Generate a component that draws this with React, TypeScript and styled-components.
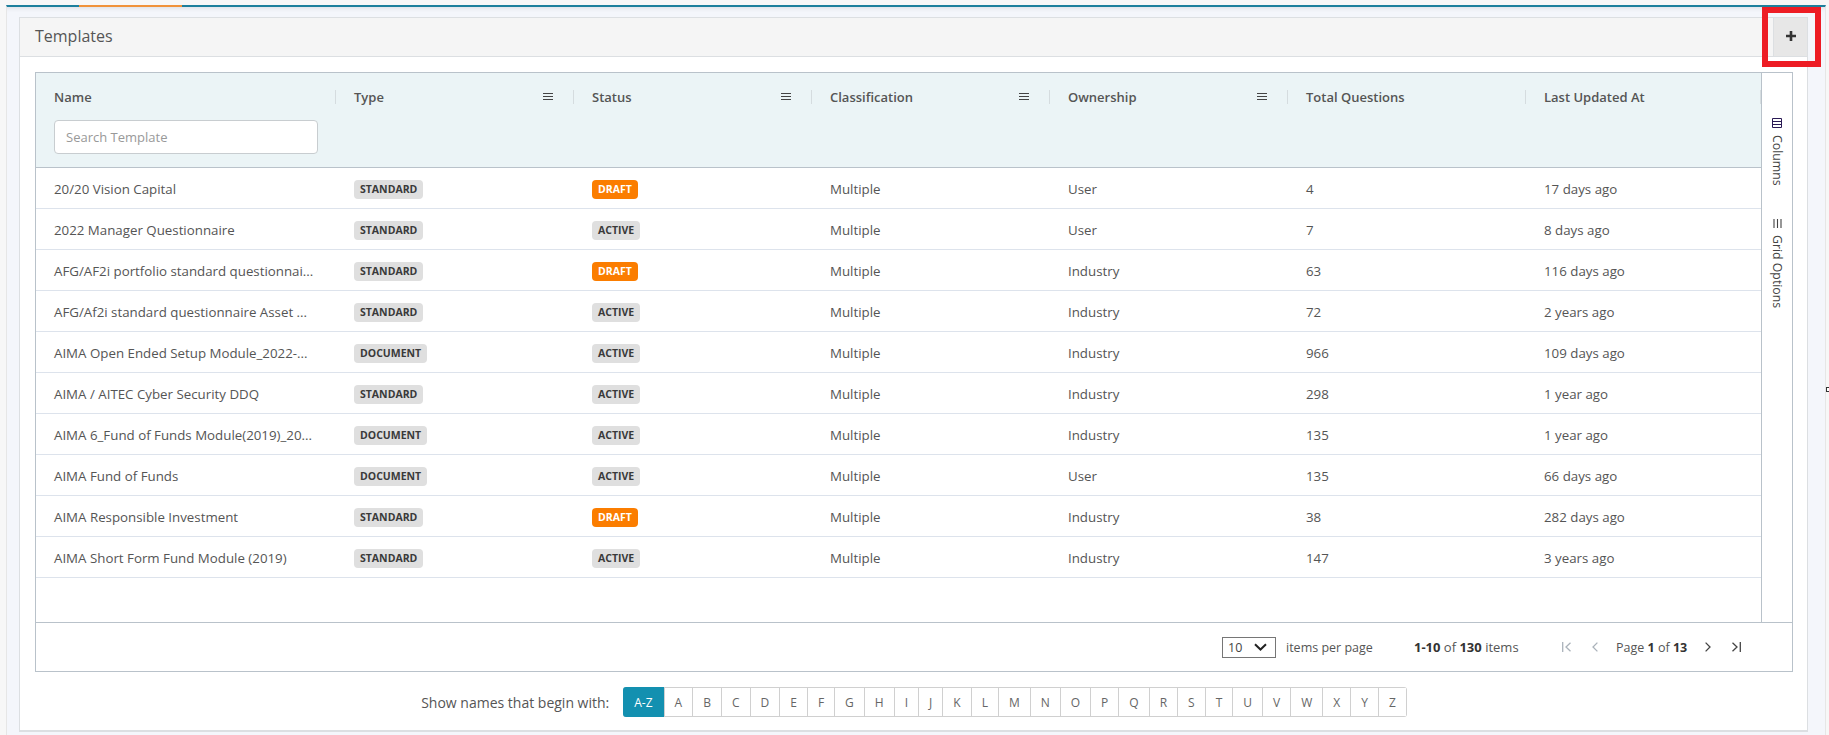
import React from "react";
import styled, { createGlobalStyle } from "styled-components";

const Global = createGlobalStyle`
  html, body { margin: 0; padding: 0; height: 735px; overflow: hidden; background: #f7f7f7; }
  body { font-family: "Open Sans", "Noto Sans", sans-serif; color: #555; font-size: 13px; }
  * { box-sizing: border-box; }
`;
const Page = styled.div`
  position: relative; width: 1829px; height: 735px; padding: 5px 3px 0 6px; overflow: hidden;
`;
const Shell = styled.div`
  position: relative; height: 730px; background: #f4f6fb;
  border-left: 1px solid #e6e6e6; border-right: 1px solid #e6e6e6; border-top: 2px solid #1d7f9c;
  padding: 10px 17px 0 12px;
  box-shadow: inset 0 5px 5px -4px rgba(0,0,0,.10);
`;
const ActiveTab = styled.div`
  position: absolute; left: 72px; top: -2px; width: 103px; height: 2px; background: #f0923a;
`;
const Panel = styled.section`
  height: 715px; background: #fff; border: 1px solid #dcdfe2; border-bottom-width: 2px;
`;
const PanelHead = styled.header`
  display: flex; align-items: stretch; justify-content: space-between; height: 39px;
  background: #f5f5f5; border-bottom: 1px solid #dcdfe2;
`;
const Title = styled.h1`
  margin: 0; padding-left: 15px; font-size: 16px; line-height: 36px; font-weight: 400; color: #555;
`;
const AddButton = styled.button`
  width: 34px; border: 0; border-left: 1px solid #dcdfe2; background: #e7e7e7; padding: 0 0 2px;
  display: flex; align-items: center; justify-content: center;
`;
const Body = styled.div`
  padding: 15px 14px 0 15px;
`;
const Grid = styled.div`
  border: 1px solid #b9c2ca; height: 600px; display: flex; flex-direction: column;
`;
const GridMain = styled.div`
  display: flex; height: 550px; border-bottom: 1px solid #b9c2ca;
`;
const GridTable = styled.div`
  flex: 1; min-width: 0;
`;
const HeadRow = styled.div`
  height: 95px; background: #ebf4f6; border-bottom: 1px solid #b9c2ca;
  display: grid; grid-template-columns: 300px repeat(5, 238px) 1fr;
`;
const HeadCell = styled.div`
  padding: 17px 0 0 18px; position: relative;
  &::after {
    content: ""; position: absolute; right: 0; top: 17px; width: 1px; height: 14px; background: #d5dcdf;
  }
`;
const HeadTop = styled.div`
  display: flex; align-items: center; justify-content: space-between; padding-right: 21px; height: 14px;
`;
const HeadLabel = styled.span`
  font-size: 13px; font-weight: 600; color: #555; line-height: 14px;
`;
const Search = styled.input`
  display: block; margin-top: 16px; width: 264px; height: 34px; padding: 0 11px;
  border: 1px solid #c8cdd0; border-radius: 4px; background: #fff; font: 400 13px "Open Sans", sans-serif; color: #555;
  &::placeholder { color: #999; opacity: 1; }
`;
const Row = styled.div`
  height: 41px; padding-top: 2px; border-bottom: 1px solid #dde3ec; display: grid; grid-template-columns: 300px repeat(5, 238px) 1fr;
  align-items: center;
`;
const Cell = styled.div`
  padding-left: 18px; font-size: 13.3px; color: #555; white-space: nowrap;
`;
const Badge = styled.span<{ $draft?: boolean }>`
  display: inline-block; height: 19px; line-height: 19px; padding: 0 6px; border-radius: 4px;
  font-size: 10.5px; font-weight: 700; vertical-align: middle;
  background: ${p => (p.$draft ? "#fb7d00" : "#dfdfdf")};
  color: ${p => (p.$draft ? "#fff" : "#3a3a3a")};
`;
const SideBar = styled.aside`
  width: 31px; border-left: 1px solid #b9c2ca; display: flex; flex-direction: column; align-items: center;
  padding-top: 45px; gap: 33px;
`;
const SideTab = styled.div`
  display: flex; flex-direction: row; align-items: center; gap: 7px;
  writing-mode: vertical-rl; font-size: 12.3px; color: #444; line-height: 14px;
`;
const Pager = styled.div`
  height: 48px; display: flex; align-items: center; padding-left: 1186px; font-size: 12.5px; color: #555;
`;
const PageSelect = styled.div`
  width: 54px; height: 21px; border: 1px solid #767676; display: flex; align-items: center;
  justify-content: space-between; padding: 0 8px 0 5px; font-size: 12.5px; color: #444;
`;
const PerPage = styled.span`
  margin-left: 10px; width: 128px;
`;
const Count = styled.span`
  width: 148px; font-size: 13px; white-space: nowrap;
`;
const PageLabel = styled.span`
  margin: 0 17px 0 18px; width: 72px; white-space: nowrap;
`;
const PagerIcon = styled.span<{ $gap?: number }>`
  display: inline-flex; margin-left: ${p => p.$gap ?? 0}px;
`;
const Strong = styled.b`
  font-weight: 700; color: #333;
`;
const Alpha = styled.div`
  display: flex; align-items: center; justify-content: center; padding: 15px 0 0 0;
`;
const AlphaLabel = styled.span`
  margin-right: 14px; font-size: 14px; color: #555;
`;
const AlphaGroup = styled.div`
  display: flex; height: 30px; border: 1px solid #d0d0d0; border-left: 0; border-radius: 3px;
`;
const Letter = styled.button<{ $active?: boolean }>`
  height: 28px; padding: 0 10px; border: 0; border-left: 1px solid #d0d0d0; font: 400 12px "Open Sans", sans-serif;
  color: ${p => (p.$active ? "#fff" : "#666")};
  background: ${p => (p.$active ? "#1390b0" : "#fff")};
  ${p => p.$active && "margin: -1px 0; height: 30px; padding: 0 11px; border-radius: 3px 0 0 3px; border-left: 0;"}
`;
const RedBox = styled.div`
  position: absolute; left: 1762px; top: 7px; width: 59px; height: 60px; border: 6px solid #ed1c24; pointer-events: none;
`;
const EdgeMark = styled.div`
  position: absolute; left: 1826px; top: 387px; width: 4px; height: 5px; border: 1px solid #333; background: #fff;
`;

const MenuIcon = () => (
  <svg width="10" height="8" viewBox="0 0 10 8"><path d="M0 .5h10M0 3.5h10M0 6.5h10" stroke="#444" strokeWidth="1" /></svg>
);
const Plus = () => (
  <svg width="10" height="10" viewBox="0 0 10 10"><path d="M5 0v10M0 5h10" stroke="#333" strokeWidth="2.6" /></svg>
);
const ColumnsIcon = () => (
  <svg width="10" height="10" viewBox="0 0 10 10"><path d="M.5.5h9v9h-9zM.5 3.5h9M.5 6.5h9" fill="none" stroke="#2a1a55" strokeWidth="1" /></svg>
);
const GridIcon = () => (
  <svg width="9" height="9" viewBox="0 0 9 9"><path d="M1 0v9M4.5 0v9M8 0v9" stroke="#444" strokeWidth="1.1" /></svg>
);
const Chevron = () => (
  <svg width="13" height="8" viewBox="0 0 13 8"><path d="M1 1.2l5.5 5.3L12 1.2" fill="none" stroke="#222" strokeWidth="2" /></svg>
);
const First = ({ c }: { c: string }) => (
  <svg width="9" height="10" viewBox="0 0 9 10"><path d="M.7 0v10M8.5 .8L4 5l4.5 4.2" fill="none" stroke={c} strokeWidth="1.3" /></svg>
);
const Prev = ({ c }: { c: string }) => (
  <svg width="6" height="10" viewBox="0 0 6 10"><path d="M5.4.6L1 5l4.4 4.4" fill="none" stroke={c} strokeWidth="1.3" /></svg>
);
const Next = ({ c }: { c: string }) => (
  <svg width="6" height="10" viewBox="0 0 6 10"><path d="M.6.6L5 5 .6 9.4" fill="none" stroke={c} strokeWidth="1.3" /></svg>
);
const Last = ({ c }: { c: string }) => (
  <svg width="9" height="10" viewBox="0 0 9 10"><path d="M8.3 0v10M.5 .8L5 5 .5 9.2" fill="none" stroke={c} strokeWidth="1.3" /></svg>
);

const heads: [string, boolean][] = [
  ["Type", true], ["Status", true], ["Classification", true], ["Ownership", true], ["Total Questions", false], ["Last Updated At", false],
];
const rows: [string, string, string, string, string, string][] = [
  ["20/20 Vision Capital", "STANDARD", "DRAFT", "User", "4", "17 days ago"],
  ["2022 Manager Questionnaire", "STANDARD", "ACTIVE", "User", "7", "8 days ago"],
  ["AFG/AF2i portfolio standard questionnai...", "STANDARD", "DRAFT", "Industry", "63", "116 days ago"],
  ["AFG/Af2i standard questionnaire Asset ...", "STANDARD", "ACTIVE", "Industry", "72", "2 years ago"],
  ["AIMA Open Ended Setup Module_2022-...", "DOCUMENT", "ACTIVE", "Industry", "966", "109 days ago"],
  ["AIMA / AITEC Cyber Security DDQ", "STANDARD", "ACTIVE", "Industry", "298", "1 year ago"],
  ["AIMA 6_Fund of Funds Module(2019)_20...", "DOCUMENT", "ACTIVE", "Industry", "135", "1 year ago"],
  ["AIMA Fund of Funds", "DOCUMENT", "ACTIVE", "User", "135", "66 days ago"],
  ["AIMA Responsible Investment", "STANDARD", "DRAFT", "Industry", "38", "282 days ago"],
  ["AIMA Short Form Fund Module (2019)", "STANDARD", "ACTIVE", "Industry", "147", "3 years ago"],
];
const letters = ["A-Z", ..."ABCDEFGHIJKLMNOPQRSTUVWXYZ".split("")];

export default function App() {
  return (
    <Page>
      <Global />
      <Shell>
        <ActiveTab />
        <Panel>
          <PanelHead>
            <Title>Templates</Title>
            <AddButton aria-label="Add"><Plus /></AddButton>
          </PanelHead>
          <Body>
            <Grid>
              <GridMain>
                <GridTable>
                  <HeadRow>
                    <HeadCell>
                      <HeadTop><HeadLabel>Name</HeadLabel></HeadTop>
                      <Search placeholder="Search Template" readOnly />
                    </HeadCell>
                    {heads.map(([h, menu]) => (
                      <HeadCell key={h}>
                        <HeadTop><HeadLabel>{h}</HeadLabel>{menu && <MenuIcon />}</HeadTop>
                      </HeadCell>
                    ))}
                  </HeadRow>
                  {rows.map(r => (
                    <Row key={r[0]}>
                      <Cell>{r[0]}</Cell>
                      <Cell><Badge>{r[1]}</Badge></Cell>
                      <Cell><Badge $draft={r[2] === "DRAFT"}>{r[2]}</Badge></Cell>
                      <Cell>Multiple</Cell>
                      <Cell>{r[3]}</Cell>
                      <Cell>{r[4]}</Cell>
                      <Cell>{r[5]}</Cell>
                    </Row>
                  ))}
                </GridTable>
                <SideBar>
                  <SideTab><ColumnsIcon />Columns</SideTab>
                  <SideTab><GridIcon />Grid Options</SideTab>
                </SideBar>
              </GridMain>
              <Pager>
                <PageSelect>10<Chevron /></PageSelect>
                <PerPage>items per page</PerPage>
                <Count><Strong>1-10</Strong> of <Strong>130</Strong> items</Count>
                <PagerIcon><First c="#aab2ba" /></PagerIcon>
                <PagerIcon $gap={21}><Prev c="#aab2ba" /></PagerIcon>
                <PageLabel>Page <Strong>1</Strong> of <Strong>13</Strong></PageLabel>
                <PagerIcon><Next c="#444" /></PagerIcon>
                <PagerIcon $gap={21}><Last c="#444" /></PagerIcon>
              </Pager>
            </Grid>
            <Alpha>
              <AlphaLabel>Show names that begin with:</AlphaLabel>
              <AlphaGroup>
                {letters.map((l, i) => <Letter key={l} $active={i === 0}>{l}</Letter>)}
              </AlphaGroup>
            </Alpha>
          </Body>
        </Panel>
      </Shell>
      <RedBox />
      <EdgeMark />
    </Page>
  );
}
